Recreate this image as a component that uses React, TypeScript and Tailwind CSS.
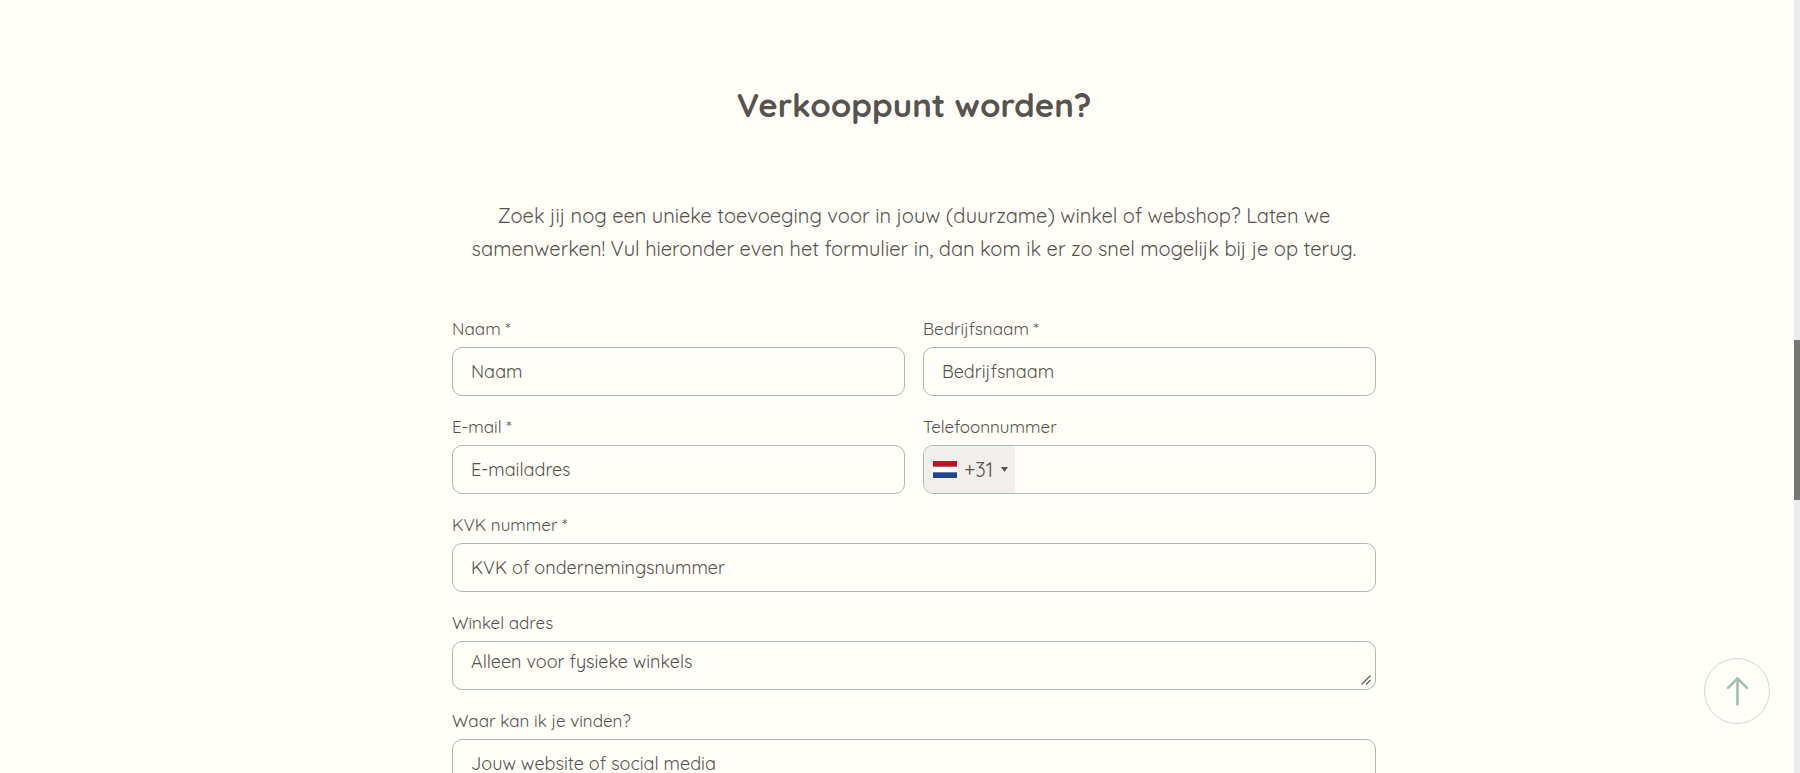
import React, { useState } from 'react';

type FieldProps = {
    id: string;
    label: string;
    placeholder?: string;
    type?: string;
};

const inputClass = "block w-full h-[49px] px-[18px] rounded-[10px] border border-[#a3bdb3] bg-transparent text-lg text-[#57534e] placeholder:text-[#57534e] outline-none focus:border-[#6f9a8a]";
const labelClass = "block h-[37px] text-[17px] leading-[38px] text-[#57534e]";

const Field = ({ id, label, placeholder, type = 'text' }: FieldProps) => (
    <div>
        <label htmlFor={id} className={labelClass}>{label}</label>
        <input id={id} type={type} placeholder={placeholder} className={inputClass} />
    </div>
);

const DutchFlag = () => (
    <svg width="24" height="17" viewBox="0 0 24 17" aria-hidden="true">
        <rect width="24" height="17" fill="#fff" />
        <rect width="24" height="5.7" fill="#ae1c28" />
        <rect y="11.3" width="24" height="5.7" fill="#21468b" />
    </svg>
);

const PhoneField = () => {
    const [phone, setPhone] = useState('');

    return (
        <div>
            <label htmlFor="phone" className={labelClass}>Telefoonnummer</label>
            <div className="flex h-[49px] rounded-[10px] border border-[#a3bdb3] overflow-hidden">
                <button type="button" className="flex items-center shrink-0 w-[91px] pl-[9px] bg-[#f0efeb] text-xl text-[#57534e]">
                    <DutchFlag />
                    <span className="ml-[7px]">+31</span>
                    <svg className="ml-2" width="7" height="5" viewBox="0 0 7 5" aria-hidden="true">
                        <path d="M0 0h7L3.5 5z" fill="#57534e" />
                    </svg>
                </button>
                <input
                    id="phone"
                    type="tel"
                    value={phone}
                    onChange={(e) => setPhone(e.target.value)}
                    className="flex-1 min-w-0 px-3 bg-transparent text-lg text-[#57534e] outline-none"
                />
            </div>
        </div>
    );
};

export default function App() {
    const handleTop = () => window.scrollTo({ top: 0, behavior: 'smooth' });

    return (
        <div className="flex h-screen overflow-hidden bg-[#fffef9] font-['Quicksand','Lato',sans-serif] text-[#57534e]">
            <main className="flex-1 min-w-0 pl-[34px] pt-20">
                <section className="max-w-[924px] mx-auto">
                    <h2 className="text-center text-[33px] leading-[50px] font-bold">Verkooppunt worden?</h2>
                    <p className="mt-[69px] text-center text-xl leading-[33px]">
                        Zoek jij nog een unieke toevoeging voor in jouw (duurzame) winkel of webshop? Laten we<br />
                        samenwerken! Vul hieronder even het formulier in, dan kom ik er zo snel mogelijk bij je op terug.
                    </p>

                    <form className="mt-[45px] space-y-3" onSubmit={(e) => e.preventDefault()}>
                        <div className="grid grid-cols-1 md:grid-cols-2 gap-x-[18px] gap-y-3">
                            <Field id="name" label="Naam *" placeholder="Naam" />
                            <Field id="company" label="Bedrijfsnaam *" placeholder="Bedrijfsnaam" />
                            <Field id="email" label="E-mail *" placeholder="E-mailadres" type="email" />
                            <PhoneField />
                        </div>
                        <Field id="kvk" label="KVK nummer *" placeholder="KVK of ondernemingsnummer" />
                        <div>
                            <label htmlFor="address" className={labelClass}>Winkel adres</label>
                            <div className="relative">
                                <textarea id="address" rows={1} placeholder="Alleen voor fysieke winkels" className={`${inputClass} py-2 leading-6 resize-none`} />
                                <svg className="absolute right-[5px] bottom-[5px]" width="10" height="10" viewBox="0 0 10 10" fill="none" stroke="#5f5d59" strokeWidth="1.2" aria-hidden="true">
                                    <path d="M0.5 9.5L9.5 0.5M5 9.5L9.5 5" />
                                </svg>
                            </div>
                        </div>
                        <Field id="website" label="Waar kan ik je vinden?" placeholder="Jouw website of social media" />
                    </form>
                </section>
            </main>

            <div className="w-[6px] shrink-0 bg-[#ebebeb] pt-[340px]">
                <div className="h-40 bg-[#757573]" />
            </div>

            <button
                type="button"
                aria-label="Naar boven"
                onClick={handleTop}
                className="fixed right-[30px] bottom-[49px] w-[66px] h-[66px] flex items-center justify-center rounded-full border border-[#cbdad3]"
            >
                <svg width="24" height="32" viewBox="0 0 24 32" fill="none" stroke="#a1beb4" strokeWidth="2.6" strokeLinecap="round" strokeLinejoin="round" aria-hidden="true">
                    <path d="M12.5 29.5V3.3M3 12.8L12.5 3.3L22 12.8" />
                </svg>
            </button>
        </div>
    );
}
